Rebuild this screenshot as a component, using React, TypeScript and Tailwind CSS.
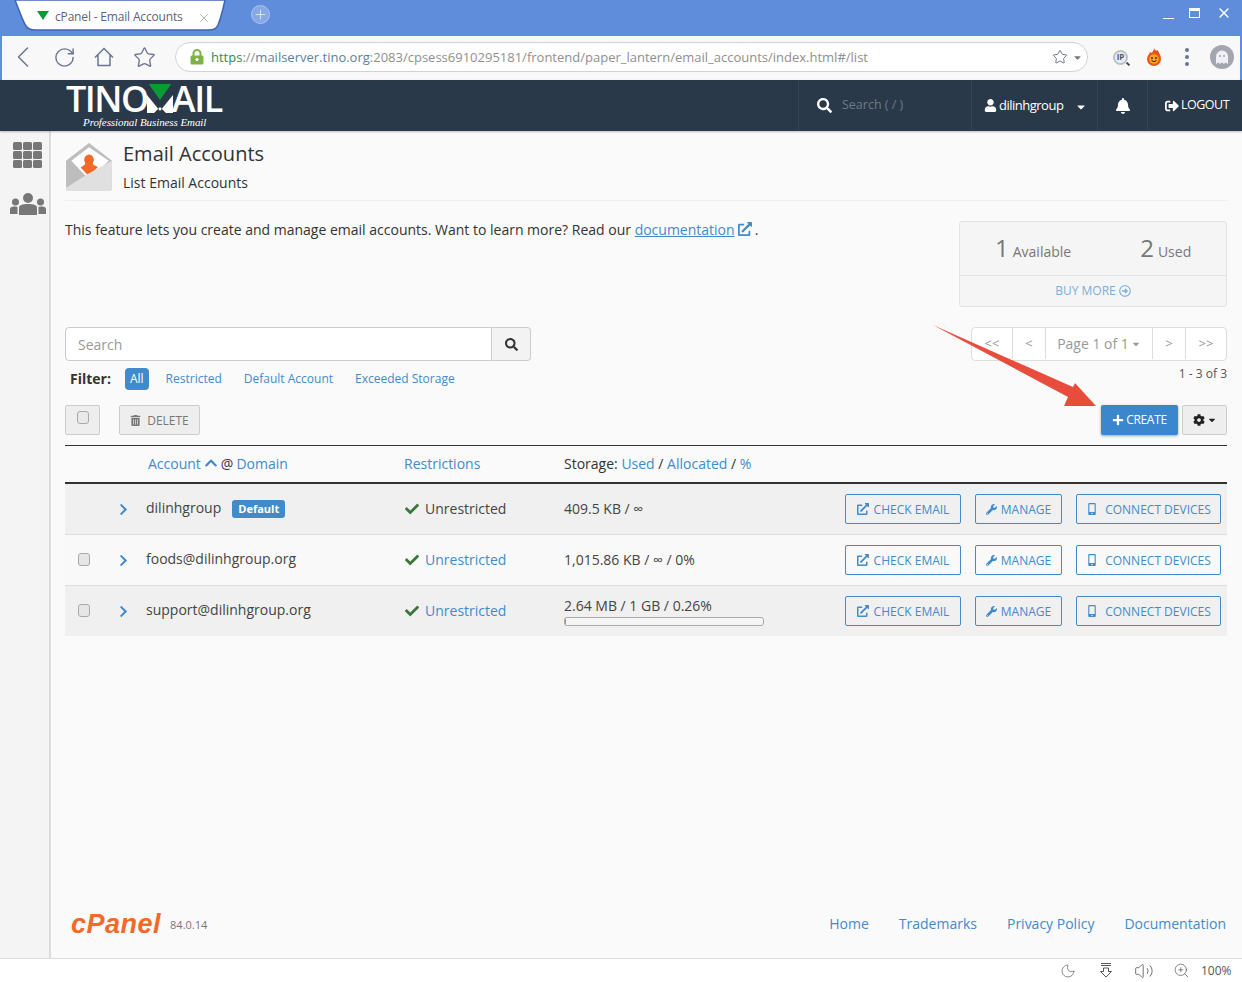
import { ChevronLeft, RotateCw, Star, Moon, Volume2, ZoomIn, X, Plus } from 'lucide-react';
import {
  FaBell,
  FaCaretDown,
  FaCheck,
  FaChevronRight,
  FaChevronUp,
  FaCog,
  FaExternalLinkAlt,
  FaMobileAlt,
  FaPlus,
  FaRegArrowAltCircleRight,
  FaSearch,
  FaSignOutAlt,
  FaTrashAlt,
  FaUser,
  FaWrench,
} from 'react-icons/fa';

const accounts = [
  { name: 'dilinhgroup', isDefault: true, storage: '409.5 KB / ∞', link: false, bar: false },
  { name: 'foods@dilinhgroup.org', isDefault: false, storage: '1,015.86 KB / ∞ / 0%', link: true, bar: false },
  { name: 'support@dilinhgroup.org', isDefault: false, storage: '2.64 MB / 1 GB / 0.26%', link: true, bar: true },
];

function BrowserChrome() {
  return (
    <>
      <div className="relative flex h-9 shrink-0 bg-[#5f8ddb]">
        <svg className="absolute left-[12px] top-0" width="216" height="32" viewBox="0 0 216 32">
          <path d="M3 0 C7 10 11 22 14 26 C16 29 18 30 23 30 H196 C202 30 204 29 206 25 C208 20 211 9 213 0 Z" fill="#fff" stroke="#3f66b0" strokeWidth="1.5" />
        </svg>
        <svg className="absolute left-[37px] top-[11px]" width="12" height="9" viewBox="0 0 12 9">
          <path d="M0 0 H12 L6 9 Z" fill="#0a9b36" />
        </svg>
        <span className="absolute left-[55px] top-[9px] text-[12px] leading-[16px] tracking-[-0.17px] text-[#5a6478]">cPanel - Email Accounts</span>
        <X className="absolute left-[197px] top-[11px] text-[#a9a9a9]" size={14} strokeWidth={1.5} />
        <div className="absolute left-[251px] top-[5px] flex h-[19px] w-[19px] items-center justify-center rounded-full border border-[#a9c3ee] bg-[#86a9e6]">
          <Plus size={15} strokeWidth={1.5} className="text-[#dce7f9]" />
        </div>
        <div className="absolute left-[1163px] top-[18px] h-px w-[11px] bg-white" />
        <div className="absolute left-[1189px] top-[8px] h-[10px] w-[11px] border border-t-[3px] border-white" />
        <X className="absolute left-[1216px] top-[5px] text-white" size={16} strokeWidth={2} />
      </div>
      <div className="flex h-11 shrink-0 items-center border-x-2 border-[#5f8ddb] bg-[#f8f8f8] pb-[2px]">
        <ChevronLeft className="ml-[3px] text-[#6b7590]" size={36} strokeWidth={1} />
        <RotateCw className="ml-[12px] text-[#6b7590]" size={23} strokeWidth={1.5} />
        <svg className="ml-[18px]" width="20" height="20" viewBox="0 0 20 20" fill="none" stroke="#6b7590" strokeWidth="1.5">
          <path d="M1 10.5 L10 1.5 L19 10.5 M4 8 V18.5 H16 V8" />
        </svg>
        <Star className="ml-[19px] text-[#6b7590]" size={23} strokeWidth={1.4} />
        <div className="ml-[19px] flex h-[30px] w-[913px] items-center rounded-full border border-[#d2d2d2] bg-white pl-[14px] pr-[4px]">
          <svg width="14" height="16" viewBox="0 0 14 16">
            <path d="M3.5 7 V4.5 a3.5 3.5 0 0 1 7 0 V7" fill="none" stroke="#7cb342" strokeWidth="2" />
            <rect x="0.5" y="6.5" width="13" height="9" rx="1.5" fill="#7cb342" />
            <circle cx="7" cy="10.5" r="1.5" fill="#fff" />
          </svg>
          <span className="ml-[7px] mt-[1px] whitespace-nowrap text-[13px] text-[#8f8f8f]">
            <span className="text-[#2e8b57]">https</span>://<span className="text-[#5b7f9f]">mailserver.tino.org</span>:2083/cpsess6910295181/frontend/paper_lantern/email_accounts/index.html#/list
          </span>
          <Star className="ml-auto text-[#6b7590]" size={16} strokeWidth={1.5} />
          <FaCaretDown className="ml-[4px] text-[#777]" size={11} />
        </div>
        <div className="relative ml-[25px] flex h-[15px] w-[15px] items-center justify-center rounded-full border-2 border-[#b9c2c8] bg-[#e9edf0] text-[8px] font-bold text-[#555]">
          IP
          <div className="absolute left-[11px] top-[11px] h-[2px] w-[4px] rotate-45 bg-[#444]" />
        </div>
        <svg className="ml-[18px]" width="16" height="18" viewBox="0 0 16 18">
          <path d="M8 0 C9 3 11 3 11.5 2 C13 5 15 7 15 11 A7 7 0 0 1 1 11 C1 8 3 7 4 4 C5 5 6 5 6.5 4 C7 3 8 2 8 0 Z" fill="#e9541d" />
          <circle cx="8" cy="11" r="4.8" fill="#f6a21e" />
          <circle cx="6" cy="10" r="0.9" fill="#4a2205" />
          <circle cx="10" cy="10" r="0.9" fill="#4a2205" />
          <path d="M5.5 12.5 Q8 15 10.5 12.5" stroke="#4a2205" fill="none" />
        </svg>
        <div className="ml-[23px] flex flex-col gap-[3.5px]">
          <div className="h-[3.5px] w-[3.5px] rounded-full bg-[#6b7590]" />
          <div className="h-[3.5px] w-[3.5px] rounded-full bg-[#6b7590]" />
          <div className="h-[3.5px] w-[3.5px] rounded-full bg-[#6b7590]" />
        </div>
        <div className="ml-[21px] flex h-6 w-6 items-center justify-center rounded-full bg-[#a3a6b1]">
          <svg width="14" height="15" viewBox="0 0 14 15">
            <path d="M1 14 V6.5 a6 6 0 0 1 12 0 V14 L10.5 12.5 L9 14 L7 12.5 L5 14 L3.5 12.5 Z" fill="#eef0f3" />
            <circle cx="5" cy="6" r="1" fill="#a3a6b1" />
            <circle cx="9" cy="6" r="1" fill="#a3a6b1" />
          </svg>
        </div>
      </div>
    </>
  );
}

function TopNav() {
  return (
    <div className="relative z-10 flex h-[51px] shrink-0 items-stretch bg-[#2a3949] text-white shadow-[0_1px_2px_rgba(0,0,0,0.25)]">
      <div className="relative ml-[66px] h-full w-[160px]">
        <div className="absolute left-0 top-[4px] flex items-start text-[36px] font-semibold leading-[29px] tracking-[-1.5px] text-white">
          <span>TINO</span>
          <svg className="-ml-[1px]" width="26" height="30" viewBox="0 0 26 30">
            <path d="M0 29 V11 L13 27 L26 11 V29 H19 L13 23 L7 29 Z" fill="#fff" />
            <path d="M1 -1 H25 L13 16 Z" fill="#0a9b36" />
          </svg>
          <span className="-ml-[1px]">AIL</span>
        </div>
        <div className="absolute left-[17px] top-[35px] whitespace-nowrap font-['Liberation_Serif',serif] text-[11px] italic leading-[14px] tracking-[-0.08px] text-white">Professional Business Email</div>
      </div>
      <div className="flex-1" />
      <div className="flex w-[173px] items-center border-l border-[#344455] pl-[18px]">
        <FaSearch size={15} />
        <span className="ml-[10px] text-[12.5px] text-[#6f7a85]">Search ( / )</span>
      </div>
      <div className="flex w-[126px] items-center border-l border-[#344455] pl-[12px]">
        <FaUser size={13} />
        <span className="ml-[2px] text-[13px] tracking-[-0.5px]">dilinhgroup</span>
        <FaCaretDown className="ml-[12px] mt-[3px]" size={12} />
      </div>
      <div className="flex w-[50px] items-center justify-center border-l border-[#344455]">
        <FaBell size={16} />
      </div>
      <div className="flex w-[95px] items-center border-l border-[#344455] pl-[17px]">
        <FaSignOutAlt size={14} />
        <span className="-mt-[1px] ml-[2px] text-[12.5px] tracking-[-0.5px]">LOGOUT</span>
      </div>
    </div>
  );
}

function Sidebar() {
  const cells = [0, 1, 2, 3, 4, 5, 6, 7, 8];
  return (
    <div className="flex w-[51px] shrink-0 flex-col items-start border-r-2 border-[#dcdcdc] bg-[#f4f4f4] pt-[11px]">
      <div className="ml-[13px] grid grid-cols-3 gap-[1px]">
        {cells.map((c) => (
          <div key={c} className="h-[8px] w-[9px] rounded-[1.5px] bg-[#777]" />
        ))}
      </div>
      <svg className="ml-[10px] mt-[25px]" width="36" height="22" viewBox="0 0 36 22">
        <circle cx="18" cy="5" r="5" fill="#777" />
        <circle cx="5.5" cy="9" r="3.5" fill="#777" />
        <circle cx="30.5" cy="9" r="3.5" fill="#777" />
        <path d="M9 22 V15 C9 12 12 11 18 11 C24 11 27 12 27 15 V22 Z" fill="#777" />
        <path d="M0 21 V16 C0 14 2 13.5 6 13.5 L7.5 14 V21 Z M36 21 V16 C36 14 34 13.5 30 13.5 L28.5 14 V21 Z" fill="#777" />
      </svg>
    </div>
  );
}

function PageHeader() {
  return (
    <div className="flex border-b border-[#eeeeee] pb-[7px]">
      <svg className="mt-[3px]" width="48" height="48" viewBox="2 1 44 46">
        <path d="M2 18 L24 1 L46 18 V44 a3 3 0 0 1 -3 3 H5 a3 3 0 0 1 -3 -3 Z" fill="#bdbdbd" />
        <path d="M7 18 L24 5 L43 18 L24 36 Z" fill="#fff" />
        <path d="M24 12 a4.5 5 0 0 1 4 7.5 c-0.5 1 -0.5 2 0.5 2.5 l4 2 L24 33 l-8 -8.5 l3.5 -2.5 c1 -0.5 1 -1.5 0.5 -2.5 a4.5 5 0 0 1 4 -7.5 Z" fill="#f26a2a" />
        <path d="M2 47 V44 L24 30 L46 18 V44 a3 3 0 0 1 -3 3 Z" fill="#e0e0e0" />
      </svg>
      <div className="ml-[10px]">
        <h1 className="text-[20px] leading-[27px] text-[#333]">Email Accounts</h1>
        <p className="mt-[6px] text-[14px] leading-[20px] text-[#333]">List Email Accounts</p>
      </div>
    </div>
  );
}

function AccountRow({ row, index }: { row: (typeof accounts)[number]; index: number }) {
  const isLast = index === accounts.length - 1;
  return (
    <div className={`flex items-center ${isLast ? 'h-[50px]' : 'h-[51px] border-b border-[#dddddd]'} ${index % 2 === 0 ? 'bg-[#f0f0f0]' : 'bg-[#f9f9f9]'}`}>
      <div className="w-[52px] shrink-0 pl-[13px]">
        {!row.isDefault && <div className="-mt-[2px] h-[13px] w-[12px] rounded-[3px] border border-[#a9a9a9] bg-[#e6e6e6]" />}
      </div>
      <div className="w-[29px] shrink-0">
        <FaChevronRight size={13} className="text-[#428bca]" />
      </div>
      <div className="flex w-[259px] shrink-0 items-center text-[14px] text-[#444]">
        <span className="-mt-[4px]">{row.name}</span>
        {row.isDefault && <span className="ml-[11px] rounded-[3px] bg-[#428bca] px-[6px] py-[1px] text-[11px] font-bold leading-[16px] text-white">Default</span>}
      </div>
      <div className="flex w-[159px] shrink-0 items-center text-[14px]">
        <FaCheck size={14} className="text-[#3c763d]" />
        <span className={`ml-[6px] -mt-[1px] ${row.link ? 'text-[#428bca]' : 'text-[#444]'}`}>Unrestricted</span>
      </div>
      <div className="w-[281px] shrink-0 text-[14px] leading-[18px] text-[#444]">
        <div>{row.storage}</div>
        {row.bar && (
          <div className="mt-[2px] h-[9px] w-[200px] overflow-hidden rounded-[3px] border border-[#aaaaaa] bg-[#f5f5f5]">
            <div className="h-full w-[1px] bg-[#5cb85c]" />
          </div>
        )}
      </div>
      <button className="flex h-[30px] w-[116px] shrink-0 items-center justify-center rounded-[2px] border border-[#428bca] text-[12px] text-[#428bca]">
        <FaExternalLinkAlt size={12} className="mr-[5px]" />
        <span className="mt-[1px]">CHECK EMAIL</span>
      </button>
      <button className="ml-[14px] flex h-[30px] w-[87px] shrink-0 items-center justify-center rounded-[2px] border border-[#428bca] text-[12px] text-[#428bca]">
        <FaWrench size={11} className="mr-[4px]" />
        <span className="mt-[1px]">MANAGE</span>
      </button>
      <button className="ml-[14px] flex h-[30px] w-[145px] shrink-0 items-center justify-center rounded-[2px] border border-[#428bca] text-[12px] text-[#428bca]">
        <FaMobileAlt size={12} className="mr-[7px]" />
        <span className="mt-[1px]">CONNECT DEVICES</span>
      </button>
    </div>
  );
}

function AccountsPanel() {
  return (
    <>
      <div className="mt-[20px] flex items-start justify-between">
        <p className="mt-[-1px] text-[14px] leading-[20px] text-[#333]">
          This feature lets you create and manage email accounts. Want to learn more? Read our{' '}
          <span className="text-[#428bca] underline">documentation</span>
          <FaExternalLinkAlt size={14} className="mx-[3px] inline align-[-1px] text-[#428bca]" />.
        </p>
        <div className="h-[86px] w-[268px] rounded-[3px] border border-[#e3e3e3] bg-[#f5f5f5] text-[#777]">
          <div className="flex h-[54px] border-b border-[#e3e3e3]">
            <div className="ml-[35px] flex items-baseline pt-[10px]">
              <span className="text-[24px] leading-[32px]">1</span>
              <span className="ml-[4px] text-[14px]">Available</span>
            </div>
            <div className="ml-[69px] flex items-baseline pt-[10px]">
              <span className="text-[24px] leading-[32px]">2</span>
              <span className="ml-[4px] text-[14px]">Used</span>
            </div>
          </div>
          <div className="flex h-[30px] items-center justify-center text-[12px] text-[#7aaedb]">
            BUY MORE
            <FaRegArrowAltCircleRight size={12} className="ml-[3px]" />
          </div>
        </div>
      </div>

      <div className="mt-[20px] flex items-start justify-between">
        <div>
          <div className="flex h-[34px] w-[466px]">
            <div className="flex flex-1 items-center rounded-l-[4px] border border-[#cccccc] bg-white pl-[12px] text-[14px] text-[#999]">Search</div>
            <div className="flex w-[39px] items-center justify-center rounded-r-[4px] border border-l-0 border-[#cccccc] bg-[#f3f3f3]">
              <FaSearch size={13} className="text-[#333]" />
            </div>
          </div>
          <div className="mt-[6px] flex h-[23px] items-center pl-[5px] text-[12px] text-[#428bca]">
            <span className="text-[14px] font-bold text-[#333]">Filter:</span>
            <span className="ml-[14px] rounded-[4px] bg-[#428bca] px-[5px] py-[2px] leading-[18px] text-white">All</span>
            <span className="ml-[17px]">Restricted</span>
            <span className="ml-[22px]">Default Account</span>
            <span className="ml-[22px]">Exceeded Storage</span>
          </div>
        </div>
        <div className="flex flex-col items-end">
          <div className="flex h-[34px] w-[256px] rounded-[4px] border border-[#dddddd] bg-white pb-[1px] text-[14px] text-[#999]">
            <div className="flex w-[41px] items-center justify-center border-r border-[#dddddd] text-[13px]">&lt;&lt;</div>
            <div className="flex w-[33px] items-center justify-center border-r border-[#dddddd] text-[13px]">&lt;</div>
            <div className="flex w-[107px] items-center justify-center border-r border-[#dddddd]">
              Page 1 of 1
              <FaCaretDown size={10} className="ml-[2px]" />
            </div>
            <div className="flex w-[33px] items-center justify-center border-r border-[#dddddd] text-[13px]">&gt;</div>
            <div className="flex flex-1 items-center justify-center text-[13px]">&gt;&gt;</div>
          </div>
          <div className="mt-[4px] text-[12px] leading-[18px] text-[#555]">1 - 3 of 3</div>
        </div>
      </div>

      <div className="mt-[15px] flex items-center">
        <div className="flex h-[30px] w-[35px] justify-center rounded-[2px] border border-[#cccccc] bg-[#eeeeee] pt-[5px]">
          <div className="h-[13px] w-[12px] rounded-[3px] border border-[#a9a9a9] bg-[#e9e9e9]" />
        </div>
        <div className="ml-[19px] flex h-[30px] w-[81px] items-center justify-center rounded-[2px] border border-[#cccccc] bg-[#eeeeee] text-[12px] text-[#777]">
          <FaTrashAlt size={11} className="mr-[6px]" />
          <span className="mt-[1px]">DELETE</span>
        </div>
        <button className="ml-auto flex h-[30px] w-[77px] items-center justify-center rounded-[2px] bg-[#3a87cd] text-[12px] tracking-[-0.3px] text-white shadow-[0_1px_3px_rgba(0,0,0,0.35)]">
          <FaPlus size={12} className="mr-[2px]" />
          CREATE
        </button>
        <button className="ml-[4px] flex h-[30px] w-[45px] items-center justify-center rounded-[2px] border border-[#cccccc] bg-[#eeeeee] text-[#222]">
          <FaCog size={12} />
          <FaCaretDown size={10} className="ml-[2px]" />
        </button>
      </div>

      <div className="mt-[10px] flex h-[39px] items-center border-b-2 border-t border-[#333] pb-[2px] text-[14px] text-[#333]">
        <div className="flex w-[339px] shrink-0 items-center pl-[83px] text-[#428bca]">
          Account
          <FaChevronUp size={14} className="mx-[3px]" />
          <span className="text-[#333]">@</span>
          <span className="ml-[3px]">Domain</span>
        </div>
        <div className="w-[160px] shrink-0 text-[#428bca]">Restrictions</div>
        <div>
          Storage: <span className="text-[#428bca]">Used</span> / <span className="text-[#428bca]">Allocated</span> / <span className="text-[#428bca]">%</span>
        </div>
      </div>
      {accounts.map((row, i) => (
        <AccountRow key={row.name} row={row} index={i} />
      ))}
    </>
  );
}

export default function App() {
  return (
    <div className="flex h-[982px] w-[1242px] flex-col overflow-hidden bg-white font-['Open_Sans',sans-serif]">
      <BrowserChrome />
      <TopNav />
      <div className="relative flex min-h-0 flex-1">
        <Sidebar />
        <div className="flex min-w-0 flex-1 flex-col bg-[#fafafa] pl-[14px] pr-[15px] pt-[9px]">
          <PageHeader />
          <AccountsPanel />
          <div className="mb-[24px] mt-auto flex h-[20px] items-center pb-[1px]">
            <span className="ml-[6px] font-['Liberation_Sans',sans-serif] text-[27px] font-bold italic leading-[30px] tracking-[0.5px] text-[#f26a2a]">cPanel</span>
            <span className="ml-[9px] mt-[3px] text-[11px] text-[#777]">84.0.14</span>
            <div className="ml-auto flex gap-[30px] pr-[1px] text-[14px] text-[#428bca]">
              <span>Home</span>
              <span>Trademarks</span>
              <span>Privacy Policy</span>
              <span>Documentation</span>
            </div>
          </div>
        </div>
        <svg className="absolute left-[930px] top-[190px]" width="170" height="90" viewBox="0 0 170 90">
          <path d="M3 4 L143 66 L145 62 L166 85 L134 85 L138 76 Z" fill="#e84c3d" />
        </svg>
      </div>
      <div className="flex h-6 shrink-0 items-center border-t border-[#dddddd] bg-white text-[#555]">
        <Moon className="ml-[1060px]" size={16} strokeWidth={1} />
        <svg className="ml-[23px]" width="14" height="15" viewBox="0 0 14 15" fill="none" stroke="#555">
          <path d="M2 .5 H12 M2 2.5 H12 M4.5 5 V8.5 H1.5 L7 14 L12.5 8.5 H9.5 V5 Z" />
        </svg>
        <Volume2 className="ml-[21px]" size={20} strokeWidth={1} />
        <ZoomIn className="ml-[19px]" size={17} strokeWidth={1} />
        <span className="ml-[11px] text-[12px]">100%</span>
      </div>
    </div>
  );
}
